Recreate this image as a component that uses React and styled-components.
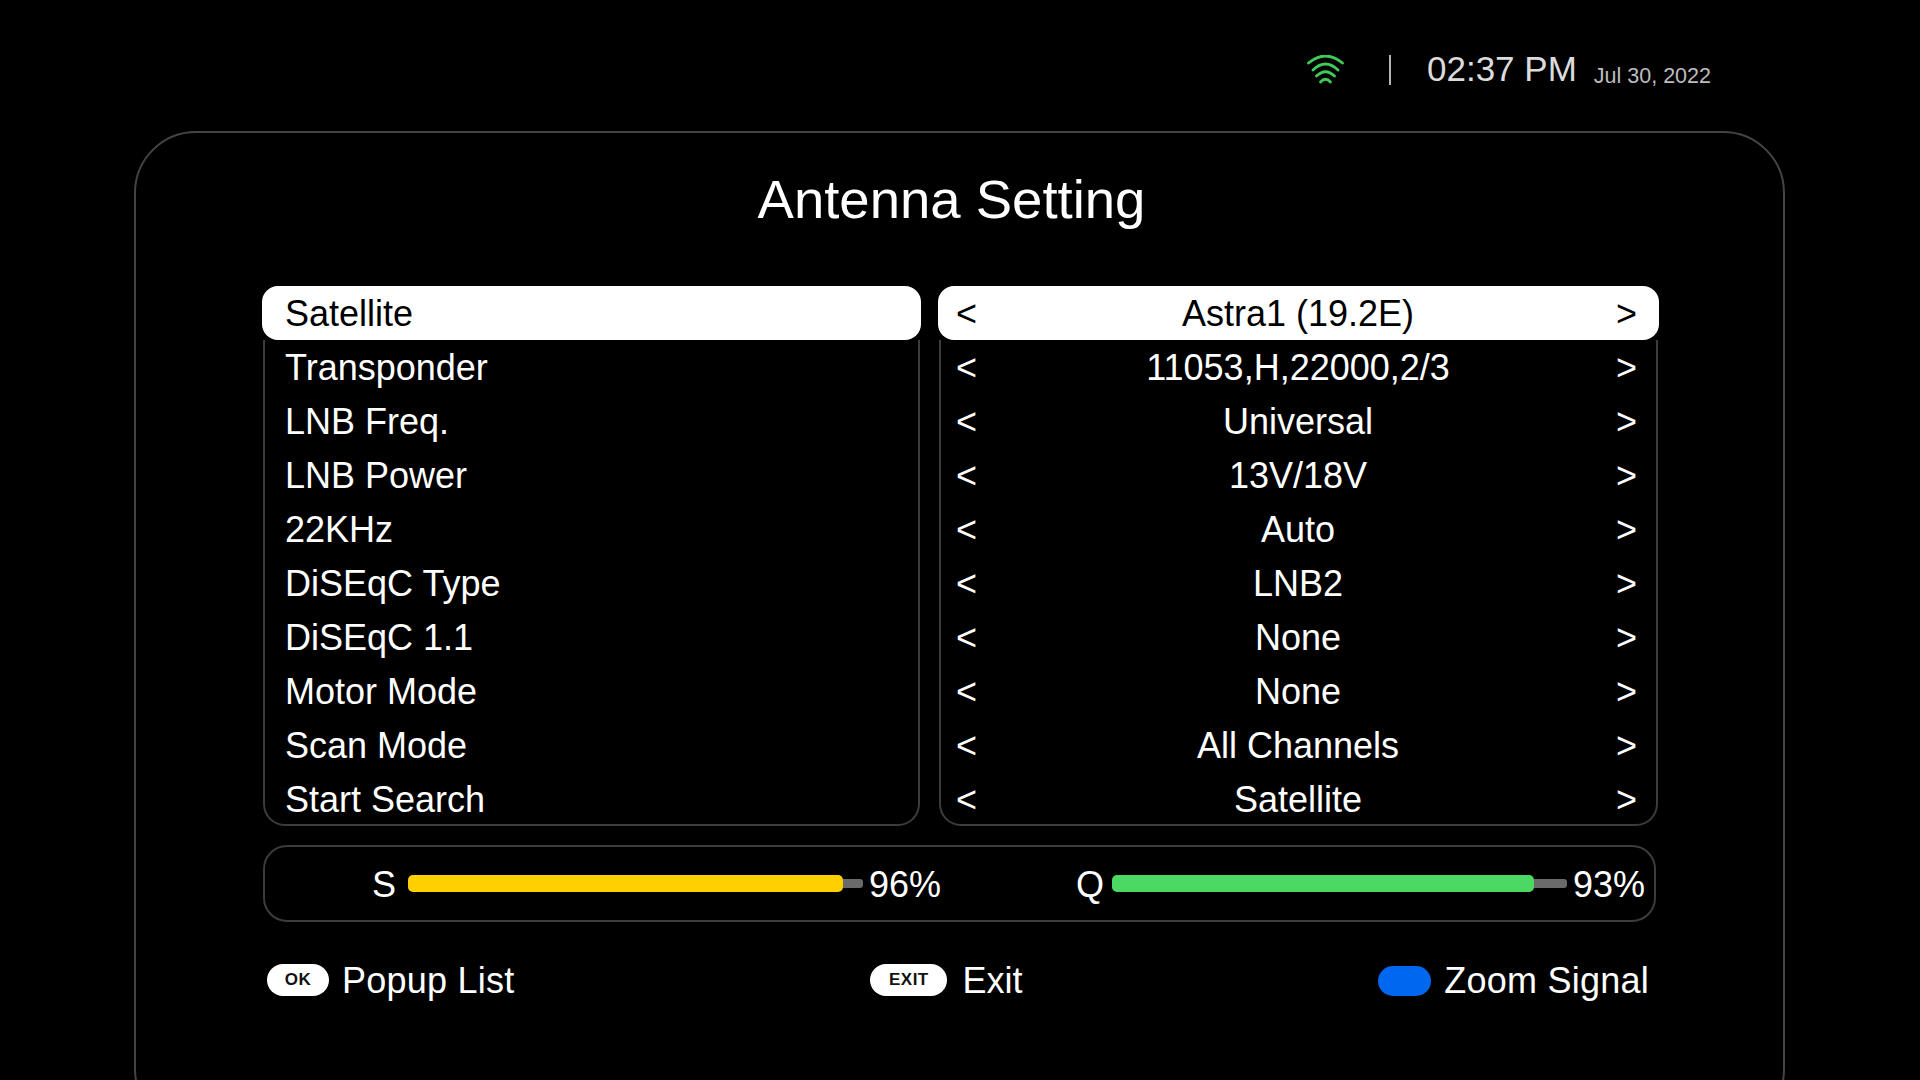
import React from 'react';
import styled, { createGlobalStyle } from 'styled-components';

const rows = [
  ['Satellite', 'Astra1 (19.2E)'],
  ['Transponder', '11053,H,22000,2/3'],
  ['LNB Freq.', 'Universal'],
  ['LNB Power', '13V/18V'],
  ['22KHz', 'Auto'],
  ['DiSEqC Type', 'LNB2'],
  ['DiSEqC 1.1', 'None'],
  ['Motor Mode', 'None'],
  ['Scan Mode', 'All Channels'],
  ['Start Search', 'Satellite'],
];

const ValueRow = ({ value, selected }) => (
  <Row $selected={selected}>
    <Arrow>&lt;</Arrow>
    <Value>{value}</Value>
    <Arrow>&gt;</Arrow>
  </Row>
);

const App = () => {
  const [first, ...rest] = rows;
  return (
    <Page>
      <GlobalStyle />
      <Header>
        <WifiIcon width="37" height="29" viewBox="0 0 37 29" fill="none" stroke="#3ecb59" strokeWidth="2.800" strokeLinecap="round">
          <path d="M1.500 8Q18.500 -6 35.500 8" />
          <path d="M6 15Q18.500 3 31 15" />
          <path d="M9.500 21Q18.500 12.500 27.500 21" />
          <path d="M13.500 27Q18.500 21.500 23.500 27" />
        </WifiIcon>
        <Divider />
        <Time>02:37 PM</Time>
        <DateText>Jul 30, 2022</DateText>
      </Header>
      <Frame>
        <Title>Antenna Setting</Title>
        <Columns>
          <Column>
            <LabelRow $selected>{first[0]}</LabelRow>
            <Panel>
              {rest.map(r => (
                <LabelRow key={r[0]}>{r[0]}</LabelRow>
              ))}
            </Panel>
          </Column>
          <Column>
            <ValueRow value={first[1]} selected />
            <Panel>
              {rest.map(r => (
                <ValueRow key={r[0]} value={r[1]} />
              ))}
            </Panel>
          </Column>
        </Columns>
        <Status>
          <Meter>
            <MeterLabel>S</MeterLabel>
            <Track>
              <Fill $pct={95.6} $color="#ffd000" />
              <Rest />
            </Track>
            <Percent>96%</Percent>
          </Meter>
          <Meter>
            <MeterLabel>Q</MeterLabel>
            <Track>
              <Fill $pct={92.7} $color="#4bd964" />
              <Rest />
            </Track>
            <Percent>93%</Percent>
          </Meter>
        </Status>
        <Footer>
          <Hint $tight>
            <KeyPill $width={62}>OK</KeyPill>
            Popup List
          </Hint>
          <Hint>
            <KeyPill $width={77}>EXIT</KeyPill>
            Exit
          </Hint>
          <Hint $tight>
            <BluePill />
            Zoom Signal
          </Hint>
        </Footer>
      </Frame>
    </Page>
  );
};

export default App;

const GlobalStyle = createGlobalStyle`
  html, body {
    margin: 0;
    height: 100%;
    background: #000;
    overflow: hidden;
  }
  * {
    box-sizing: border-box;
  }
`;

const Page = styled.div`
  width: 1920px;
  height: 1080px;
  overflow: hidden;
  background: #000;
  color: #fff;
  font-family: 'Liberation Sans', Arial, sans-serif;
`;

const Header = styled.header`
  height: 131px;
  padding: 54px 0 0 1307px;
  display: flex;
  align-items: flex-start;
  white-space: nowrap;
`;

const WifiIcon = styled.svg`
  margin-top: 1px;
`;

const Divider = styled.div`
  width: 2px;
  height: 30px;
  margin: 1px 36px 0 45px;
  background: #b5b5b5;
`;

const Time = styled.div`
  font-size: 35px;
  line-height: 30px;
  color: #dcdcdc;
`;

const DateText = styled.div`
  margin: 10px 0 0 17px;
  font-size: 21.500px;
  line-height: 24px;
  color: #bdbdbd;
`;

const Frame = styled.main`
  width: 1651px;
  height: 1000px;
  margin-left: 134px;
  padding: 0 126px;
  border: 2px solid #444;
  border-radius: 62px;
`;

const Title = styled.h1`
  margin: 0;
  padding: 36px 16px 0 0;
  height: 153px;
  font-size: 54.500px;
  line-height: 62px;
  font-weight: 400;
  text-align: center;
`;

const Columns = styled.div`
  display: grid;
  grid-template-columns: 659px 721px;
  column-gap: 17px;
`;

const Column = styled.div`
  display: flex;
  flex-direction: column;
`;

const Panel = styled.div`
  height: 486px;
  margin: 0 1px;
  border: 2px solid #3c3c3c;
  border-top: none;
  border-radius: 0 0 22px 22px;
`;

const Row = styled.div`
  height: 54px;
  padding-top: 1px;
  display: flex;
  align-items: center;
  font-size: 36px;
  white-space: nowrap;
  padding-left: ${p => (p.$selected ? '18px' : '15px')};
  padding-right: ${p => (p.$selected ? '23px' : '20px')};
  color: ${p => (p.$selected ? '#000' : '#fff')};
  background: ${p => (p.$selected ? '#fff' : 'transparent')};
  border-radius: 16px;
`;

const LabelRow = styled(Row)`
  padding-right: 0;
  padding-left: ${p => (p.$selected ? '23px' : '20px')};
`;

const Arrow = styled.span`
  width: 20px;
  text-align: center;
`;

const Value = styled.span`
  flex: 1;
  padding-left: 4px;
  text-align: center;
`;

const Status = styled.section`
  width: 1393px;
  height: 77px;
  margin: 19px 0 0 1px;
  padding: 2px 0 0 107px;
  display: flex;
  align-items: center;
  border: 2px solid #3c3c3c;
  border-radius: 24px;
`;

const Meter = styled.div`
  display: flex;
  align-items: center;
  margin-right: 135px;
  font-size: 36px;
`;

const MeterLabel = styled.span`
  width: 36px;
`;

const Track = styled.div`
  width: 455px;
  display: flex;
  align-items: center;
  margin-top: -2px;
`;

const Fill = styled.div`
  height: 17px;
  width: ${p => p.$pct}%;
  background: ${p => p.$color};
  border-radius: 5px;
`;

const Rest = styled.div`
  flex: 1;
  height: 9px;
  background: #6a6a6a;
  border-radius: 0 3px 3px 0;
`;

const Percent = styled.span`
  margin-left: 6px;
`;

const Footer = styled.footer`
  width: 1393px;
  margin-top: 42px;
  padding: 0 6px 0 5px;
  display: flex;
  justify-content: space-between;
`;

const Hint = styled.div`
  display: flex;
  align-items: center;
  height: 34px;
  gap: ${p => (p.$tight ? '13px' : '15px')};
  letter-spacing: ${p => (p.$tight ? '0.250px' : '0')};
  font-size: 36px;
  white-space: nowrap;
`;

const KeyPill = styled.span`
  width: ${p => p.$width}px;
  height: 32px;
  margin-top: -2px;
  border-radius: 16px;
  display: flex;
  align-items: center;
  justify-content: center;
  background: #fff;
  color: #111;
  font-size: 17px;
  font-weight: 700;
  letter-spacing: 0.500px;
`;

const BluePill = styled.span`
  width: 53px;
  height: 30px;
  border-radius: 15px;
  background: #0068f0;
`;
